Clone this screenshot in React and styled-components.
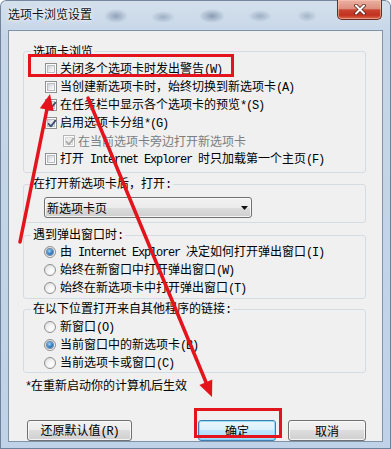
import React from 'react';
import styled, { createGlobalStyle } from 'styled-components';

const CJK = `"Noto Sans CJK SC", "Noto Sans", sans-serif`;

const GlobalStyle = createGlobalStyle`
  html, body { margin: 0; padding: 0; background: #ffffff; }
  body { width: 391px; height: 449px; overflow: hidden; }
  #root { width: 391px; height: 449px; }
`;

const Window = styled.div`
  position: relative;
  box-sizing: border-box;
  width: 391px;
  height: 449px;
  display: flex;
  flex-direction: column;
  padding: 0 8px 7px 8px;
  border-radius: 6px 6px 0 0;
  background:
    radial-gradient(ellipse 12px 7px at 116px 16px, rgba(70, 92, 125, 0.45), rgba(70, 92, 125, 0) 100%),
    radial-gradient(ellipse 12px 6px at 163px 17px, rgba(70, 92, 125, 0.35), rgba(70, 92, 125, 0) 100%),
    radial-gradient(ellipse 13px 7px at 212px 16px, rgba(70, 92, 125, 0.5), rgba(70, 92, 125, 0) 100%),
    radial-gradient(ellipse 12px 6px at 260px 16px, rgba(70, 92, 125, 0.35), rgba(70, 92, 125, 0) 100%),
    radial-gradient(ellipse 10px 6px at 307px 16px, rgba(70, 92, 125, 0.3), rgba(70, 92, 125, 0) 100%),
    linear-gradient(180deg, #d4e0ec 0%, #c6d6e8 8%, #bfd2e7 100%);
  box-shadow: inset 0 0 0 1px rgba(55, 75, 105, 0.6);
  font-family: ${CJK};
  font-size: 12px;
  color: #000;
`;

const TitleBar = styled.div`
  flex: none;
  height: 30px;
  display: flex;
  justify-content: space-between;
  align-items: flex-start;
`;

const Title = styled.div`
  padding-top: 7px;
  line-height: 14px;
  font-size: 12px;
  color: #111;
  text-shadow: 0 0 5px rgba(255, 255, 255, 0.95), 0 0 2px rgba(255, 255, 255, 0.9);
`;

const CloseButton = styled.div`
  box-sizing: border-box;
  width: 45px;
  height: 20px;
  margin-right: 1px;
  border: 1px solid #6a2b22;
  border-top: none;
  border-radius: 0 0 5px 5px;
  background: linear-gradient(180deg, #eab2a4 0%, #de8f7e 45%, #c94632 52%, #c2311e 80%, #d8684d 100%);
  box-shadow: inset 0 0 0 1px rgba(255, 200, 185, 0.55);
  display: flex;
  align-items: center;
  justify-content: center;
`;

const Client = styled.div`
  flex: 1;
  box-sizing: border-box;
  border: 1px solid #7f94ab;
  background: #f0f0f0;
  padding: 13px 16px 0 14px;
  display: flex;
  flex-direction: column;
`;

const Group = styled.fieldset`
  margin: ${(p) => p.$mt}px 0 0 0;
  padding: ${(p) => p.$pt}px 8px ${(p) => p.$pb}px 7px;
  border: 1px solid #d3dce3;
  border-radius: 3px;
  min-width: 0;
`;

const Legend = styled.legend`
  padding: 0 2px;
  line-height: 14px;
  font-size: 12px;
  color: #000;
`;

const Row = styled.div`
  height: 18px;
  display: flex;
  align-items: center;
  gap: 3px;
  padding-left: ${(p) => p.$indent}px;
  color: ${(p) => (p.$disabled ? '#7d7d7d' : '#000')};
  white-space: nowrap;
  line-height: 14px;
`;

const Label = styled.span`
  white-space: pre;
`;

const Lat = styled.span`
  font-family: "Liberation Mono", "DejaVu Sans Mono", monospace;
  font-size: 12px;
  letter-spacing: -1.2px;
  white-space: pre;
`;

const Box = styled.span`
  position: relative;
  flex: none;
  box-sizing: border-box;
  width: 12px;
  height: 12px;
  border: 1px solid ${(p) => (p.$disabled ? '#b5b5b5' : '#8e8f8f')};
  background: #fdfdfd;
  &::before {
    content: '';
    position: absolute;
    left: 1px;
    top: 1px;
    right: 1px;
    bottom: 1px;
    border: 1px solid ${(p) => (p.$disabled ? '#dadada' : '#b9bdc3')};
    background: linear-gradient(135deg, ${(p) => (p.$disabled ? '#e8e8e8' : '#cdd1d6')} 0%, #f3f3f3 70%, #fbfbfb 100%);
  }
  svg {
    position: absolute;
    left: 0;
    top: 0;
  }
`;

const RadioDot = styled.span`
  position: relative;
  flex: none;
  box-sizing: border-box;
  width: 12px;
  height: 12px;
  margin-right: 1px;
  border-radius: 50%;
  border: 1px solid #8e8f8f;
  background: radial-gradient(circle at 65% 70%, #ffffff 0%, #f2f2f2 45%, #d3d5d8 100%);
  &::after {
    content: '';
    display: ${(p) => (p.$checked ? 'block' : 'none')};
    position: absolute;
    left: 2px;
    top: 2px;
    width: 6px;
    height: 6px;
    border-radius: 50%;
    background: radial-gradient(circle at 40% 35%, #a8d8f6 0%, #3a8ad0 45%, #173f74 100%);
    box-shadow: 0 0 0 1px rgba(30, 70, 120, 0.6);
  }
`;

const SelectBox = styled.div`
  box-sizing: border-box;
  margin-left: 13px;
  width: 208px;
  height: 21px;
  border: 1px solid #707070;
  border-radius: 3px;
  background: linear-gradient(180deg, #f2f2f2 0%, #ebebeb 50%, #dddddd 50%, #cfcfcf 100%);
  box-shadow: inset 0 0 0 1px rgba(252, 252, 252, 0.8);
  display: flex;
  align-items: center;
  justify-content: space-between;
  padding: 0 3px 0 2px;
  line-height: 14px;
`;

const Note = styled.div`
  margin: 5px 0 0 2px;
  line-height: 14px;
`;

const ButtonRow = styled.div`
  margin: 26px 0 0 4px;
  display: flex;
  justify-content: space-between;
`;

const ButtonGroup = styled.div`
  display: flex;
  gap: 12px;
`;

const Button = styled.button`
  box-sizing: border-box;
  width: ${(p) => p.$w}px;
  height: 21px;
  margin: 0;
  padding: 0;
  font-family: ${CJK};
  font-size: 12px;
  line-height: 14px;
  color: #000;
  border: 1px solid ${(p) => (p.$primary ? '#3c7fb1' : '#707070')};
  border-radius: 3px;
  background: ${(p) =>
    p.$primary
      ? 'linear-gradient(180deg, #eaf6fd 0%, #d9f0fc 50%, #bee6fd 50%, #a7d9f5 100%)'
      : 'linear-gradient(180deg, #f2f2f2 0%, #ebebeb 50%, #dddddd 50%, #cfcfcf 100%)'};
  box-shadow: inset 0 0 0 1px ${(p) => (p.$primary ? 'rgba(120, 210, 250, 0.7)' : 'rgba(252, 252, 252, 0.8)')};
`;

const Overlay = styled.svg`
  position: absolute;
  left: 0;
  top: 0;
  width: 391px;
  height: 449px;
  pointer-events: none;
`;

function Check({ checked, disabled, indent, children }) {
  return (
    <Row $indent={indent} $disabled={disabled}>
      <Box $disabled={disabled}>
        {checked && (
          <svg width="12" height="12" viewBox="0 0 12 12">
            <path
              d="M2.6 5.8 L4.9 8.4 L9.4 2.6"
              fill="none"
              stroke={disabled ? '#a9a9a9' : '#3b4d70'}
              strokeWidth="1.8"
              strokeLinecap="round"
              strokeLinejoin="round"
            />
          </svg>
        )}
      </Box>
      <Label>{children}</Label>
    </Row>
  );
}

function Radio({ checked, children }) {
  return (
    <Row $indent={13}>
      <RadioDot $checked={checked} />
      <Label>{children}</Label>
    </Row>
  );
}

export default function App() {
  const red = '#e3141c';
  return (
    <>
      <GlobalStyle />
      <Window>
        <TitleBar>
          <Title>选项卡浏览设置</Title>
          <CloseButton>
            <svg width="12" height="11" viewBox="0 0 12 11">
              <path d="M2 1.5 L10 9.5 M10 1.5 L2 9.5" stroke="#5a2018" strokeWidth="3.6" strokeLinecap="round" />
              <path d="M2 1.5 L10 9.5 M10 1.5 L2 9.5" stroke="#ffffff" strokeWidth="2" strokeLinecap="round" />
            </svg>
          </CloseButton>
        </TitleBar>
        <Client>
          <Group $mt={0} $pt={2} $pb={4}>
            <Legend>选项卡浏览</Legend>
            <Check indent={14}>
              关闭多个选项卡时发出警告<Lat>(W)</Lat>
            </Check>
            <Check indent={14}>
              当创建新选项卡时，始终切换到新选项卡<Lat>(A)</Lat>
            </Check>
            <Check indent={14} checked>
              在任务栏中显示各个选项卡的预览<Lat>*(S)</Lat>
            </Check>
            <Check indent={14} checked>
              启用选项卡分组<Lat>*(G)</Lat>
            </Check>
            <Check indent={32} checked disabled>
              在当前选项卡旁边打开新选项卡
            </Check>
            <Check indent={14}>
              打开<Lat> Internet Explorer </Lat>时只加载第一个主页<Lat>(F)</Lat>
            </Check>
          </Group>

          <Group $mt={3} $pt={5} $pb={4}>
            <Legend>
              在打开新选项卡后，打开<Lat>:</Lat>
            </Legend>
            <SelectBox>
              <span>新选项卡页</span>
              <svg width="7" height="4" viewBox="0 0 7 4">
                <path d="M0 0 L7 0 L3.5 4 Z" fill="#111" />
              </svg>
            </SelectBox>
          </Group>

          <Group $mt={4} $pt={0} $pb={1}>
            <Legend>
              遇到弹出窗口时<Lat>:</Lat>
            </Legend>
            <Radio checked>
              由<Lat> Internet Explorer </Lat>决定如何打开弹出窗口<Lat>(I)</Lat>
            </Radio>
            <Radio>
              始终在新窗口中打开弹出窗口<Lat>(W)</Lat>
            </Radio>
            <Radio>
              始终在新选项卡中打开弹出窗口<Lat>(T)</Lat>
            </Radio>
          </Group>

          <Group $mt={2} $pt={1} $pb={0}>
            <Legend>
              在以下位置打开来自其他程序的链接<Lat>:</Lat>
            </Legend>
            <Radio>
              新窗口<Lat>(O)</Lat>
            </Radio>
            <Radio checked>
              当前窗口中的新选项卡<Lat>(B)</Lat>
            </Radio>
            <Radio>
              当前选项卡或窗口<Lat>(C)</Lat>
            </Radio>
          </Group>

          <Note>
            <Lat>*</Lat>在重新启动你的计算机后生效
          </Note>

          <ButtonRow>
            <Button $w={105}>
              还原默认值<Lat>(R)</Lat>
            </Button>
            <ButtonGroup>
              <Button $w={78} $primary>
                确定
              </Button>
              <Button $w={78}>取消</Button>
            </ButtonGroup>
          </ButtonRow>
        </Client>

        <Overlay viewBox="0 0 391 449">
          <rect x="29.5" y="55.5" width="203" height="20" fill="none" stroke={red} strokeWidth="3" />
          <rect x="195.5" y="409.5" width="85" height="27" fill="none" stroke={red} strokeWidth="3" />
          <line x1="20" y1="242" x2="46.8" y2="110" stroke={red} strokeWidth="3.5" strokeLinecap="round" />
          <polygon points="50,94 53.7,111.1 39.9,108.3" fill={red} />
          <line x1="88" y1="98" x2="205.9" y2="382" stroke={red} strokeWidth="3.5" strokeLinecap="round" />
          <polygon points="212,397 199.4,384.9 212.3,379.5" fill={red} />
        </Overlay>
      </Window>
    </>
  );
}
